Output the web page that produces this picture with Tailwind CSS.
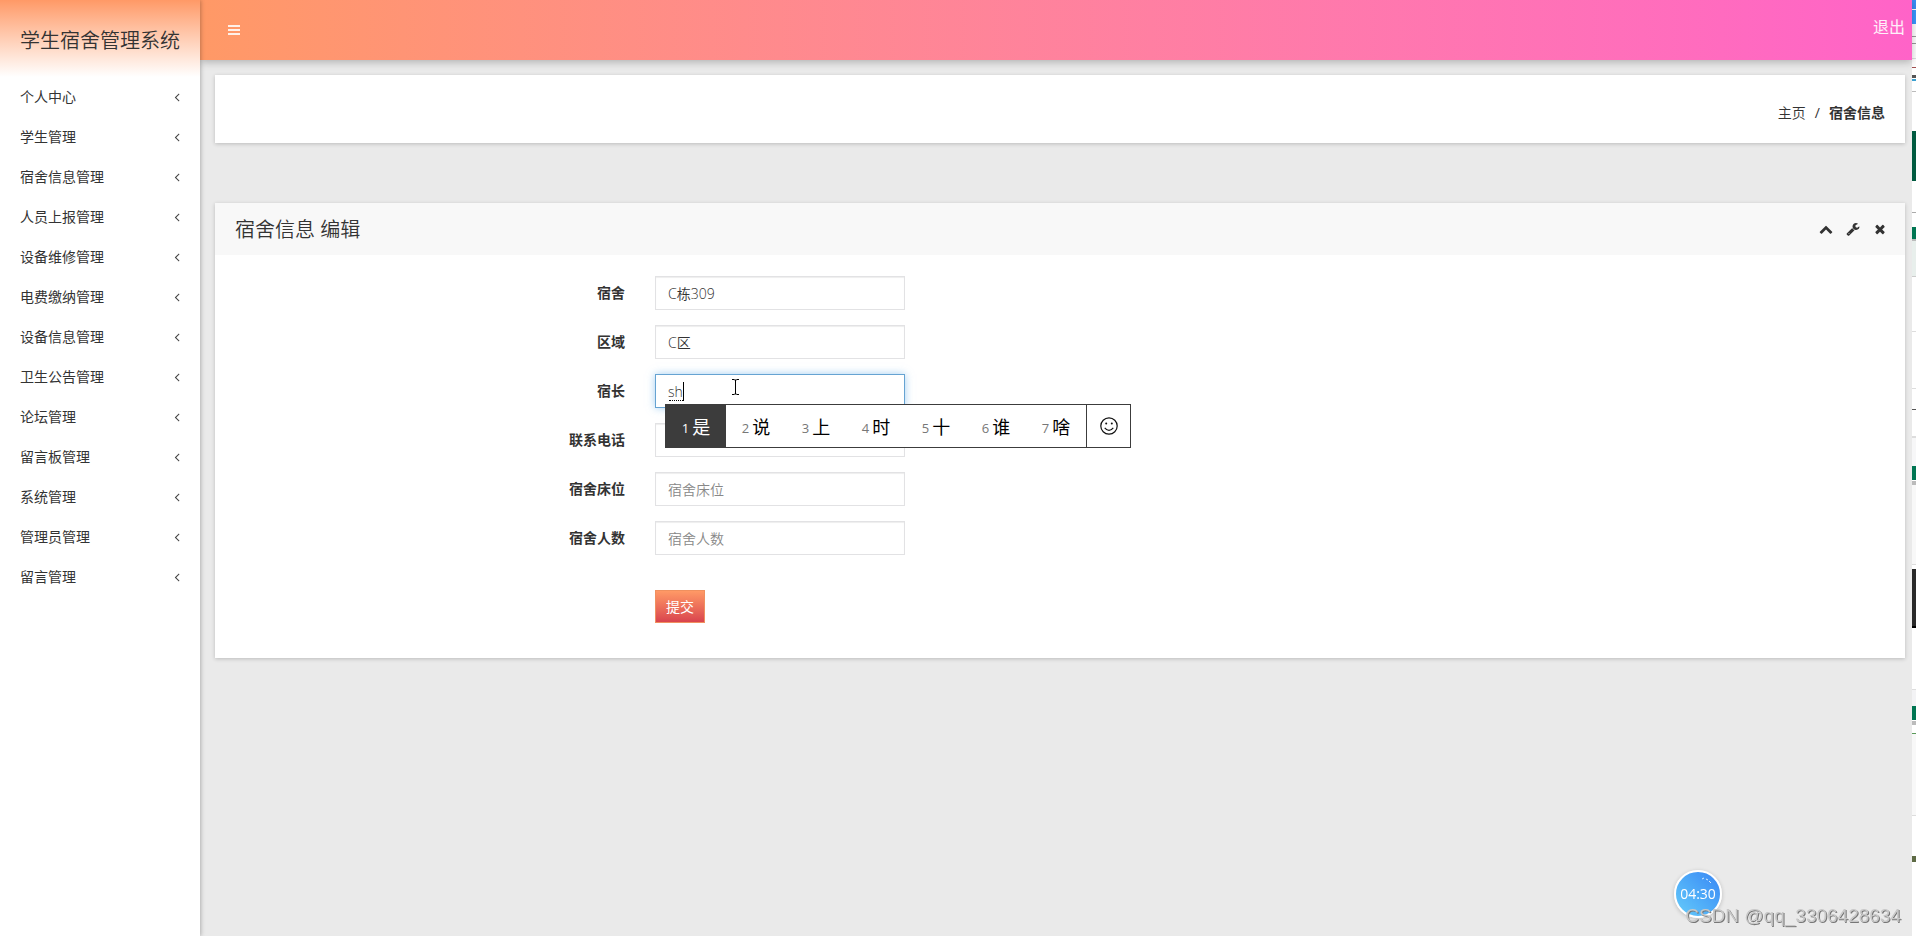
<!DOCTYPE html>
<html lang="zh-CN">
<head>
<meta charset="utf-8">
<title>学生宿舍管理系统</title>
<script src="https://cdn.jsdelivr.net/npm/@tailwindcss/browser@4"></script>
</head>
<body class="flex h-screen overflow-hidden bg-[#eaeaea] font-['Open_Sans','Noto_Sans_CJK_SC',sans-serif] text-sm text-[#333]">
<svg class="hidden">
  <symbol id="angle" viewBox="0 0 1792 1792"><path d="M1203 544q0 13-10 23l-393 393 393 393q10 10 10 23t-10 23l-50 50q-10 10-23 10t-23-10l-466-466q-10-10-10-23t10-23l466-466q10-10 23-10t23 10l50 50q10 10 10 23z"/></symbol>
</svg>

<aside class="relative z-20 w-[200px] shrink-0 bg-white shadow-[1px_0_4px_rgba(0,0,0,0.25)]">
  <h1 class="flex h-[77px] items-center bg-linear-to-b from-[#ff9966] to-white px-5 pt-1 text-xl font-[350] whitespace-nowrap">学生宿舍管理系统</h1>
  <nav>
    <ul id="menu"></ul>
  </nav>
</aside>

<div class="flex min-w-0 flex-1 flex-col">
  <header class="relative z-10 flex h-[60px] shrink-0 items-center justify-between bg-linear-to-r from-[#ff9966] to-[#ff63c8] pr-[7px] pl-7 text-white shadow-[0_2px_8px_rgba(0,0,0,0.25)]">
    <button type="button" aria-label="菜单" class="flex w-3 flex-col gap-[2px]">
      <span class="h-[2px] bg-white/85"></span><span class="h-[2px] bg-white/85"></span><span class="h-[2px] bg-white/85"></span>
    </button>
    <a href="#" class="pb-[6px] text-base text-white/90">退出</a>
  </header>

  <main class="flex-1 pt-[15px] pr-[7px] pl-[15px]">
    <nav class="flex h-[68px] items-center justify-end bg-white px-5 pt-2 shadow-[0_1px_4px_rgba(0,0,0,0.2)]">
      <a href="#" class="font-[350]">主页</a>
      <span class="px-[9px]">/</span>
      <span class="font-bold">宿舍信息</span>
    </nav>

    <section class="mt-[60px] bg-white shadow-[0_1px_4px_rgba(0,0,0,0.2)]">
      <div class="flex h-[52px] items-center justify-between bg-[#f8f8f8] pr-[18px] pl-5">
        <h2 class="pt-[2px] text-xl font-[350]">宿舍信息 编辑</h2>
        <div class="flex gap-[13px]">
          <button type="button" aria-label="收起"><svg class="size-[14px] fill-[#333]" viewBox="0 0 1792 1792"><path d="M1683 1331l-166 165q-19 19-45 19t-45-19l-531-531-531 531q-19 19-45 19t-45-19l-166-165q-19-19-19-45.500t19-45.500l742-741q19-19 45-19t45 19l742 741q19 19 19 45.500t-19 45.500z"/></svg></button>
          <button type="button" aria-label="设置"><svg class="size-[14px] fill-[#333]" viewBox="0 0 1792 1792"><path d="M448 1472q0-26-19-45t-45-19-45 19-19 45 19 45 45 19 45-19 19-45zm644-420l-682 682q-37 37-90 37-52 0-91-37l-106-108q-38-36-38-90 0-53 38-91l681-681q39 98 114.500 173.500t173.500 114.500zm634-435q0 39-23 106-47 134-164.500 217.500t-258.500 83.500q-185 0-316.500-131.500t-131.500-316.500 131.500-316.500 316.500-131.500q58 0 121.500 16.500t107.500 46.500q16 11 16 28t-16 28l-293 169v224l193 107q5-3 79-48.500t135.500-81 70.500-35.500q15 0 23.500 10t8.500 25z"/></svg></button>
          <button type="button" aria-label="关闭"><svg class="size-[14px] fill-[#333]" viewBox="0 0 1792 1792"><path d="M1490 1322q0 40-28 68l-136 136q-28 28-68 28t-68-28l-294-294-294 294q-28 28-68 28t-68-28l-136-136q-28-28-28-68t28-68l294-294-294-294q-28-28-28-68t28-68l136-136q28-28 68-28t68 28l294 294 294-294q28-28 68-28t68 28l136 136q28 28 28 68t-28 68l-294 294 294 294q28 28 28 68z"/></svg></button>
        </div>
      </div>

      <form class="flex flex-col gap-[15px] px-[5px] pt-[21px] pb-[35px]">
        <div class="flex items-center">
          <label for="dorm" class="w-1/4 pr-[15px] text-right font-bold">宿舍</label>
          <div class="pl-[15px]"><input id="dorm" value="C栋309" class="block h-[34px] w-[250px] border border-[#e2e2e4] px-3 font-[350] shadow-[inset_0_1px_1px_rgba(0,0,0,0.07)]"></div>
        </div>
        <div class="flex items-center">
          <label for="area" class="w-1/4 pr-[15px] text-right font-bold">区域</label>
          <div class="pl-[15px]"><input id="area" value="C区" class="block h-[34px] w-[250px] border border-[#e2e2e4] px-3 font-[350] shadow-[inset_0_1px_1px_rgba(0,0,0,0.07)]"></div>
        </div>
        <div class="flex items-center">
          <label for="head" class="w-1/4 pr-[15px] text-right font-bold">宿长</label>
          <div class="pl-[15px]">
            <div class="relative">
              <input id="head" value="sh" class="block h-[34px] w-[250px] border border-[#66a3d2] px-3 font-[350] shadow-[0_0_8px_rgba(102,175,233,0.6)] outline-none">
              <!-- composition underline and caret -->
              <span class="absolute top-[8px] left-[13px] h-[19px] w-4 border-r border-r-black"></span>
              <span class="absolute top-[26px] left-[14px] w-[14px] border-b border-dotted border-black"></span>
              <svg class="absolute top-[5px] left-[76px] h-4 w-[9px]" viewBox="0 0 9 16" fill="none" stroke="#000"><path d="M1 .5h2.500M5.500 .5H8M1 15.500h2.500M5.500 15.500H8M4.500 1v14M3.500 1h2M3.500 15h2"/></svg>
              <!-- input method candidates -->
              <div class="absolute top-[30px] left-[10px] z-10 flex h-11 items-stretch border border-[#3c3c3c] bg-white text-lg text-black">
                <ol id="candidates" class="flex"></ol>
                <button type="button" aria-label="表情" class="flex w-11 items-center justify-center border-l border-[#3c3c3c]">
                  <svg class="size-[18px]" viewBox="0 0 18 18" fill="none" stroke="#111" stroke-width="1.200"><circle cx="9" cy="9" r="8.200"/><path d="M4.700 10.800q4.300 5 8.600 0"/><circle cx="6.200" cy="6.500" r="1" fill="#111" stroke="none"/><circle cx="11.800" cy="6.500" r="1" fill="#111" stroke="none"/></svg>
                </button>
              </div>
            </div>
          </div>
        </div>
        <div class="flex items-center">
          <label for="phone" class="w-1/4 pr-[15px] text-right font-bold">联系电话</label>
          <div class="pl-[15px]"><input id="phone" class="block h-[34px] w-[250px] border border-[#e2e2e4] px-3 font-[350] shadow-[inset_0_1px_1px_rgba(0,0,0,0.07)]"></div>
        </div>
        <div class="flex items-center">
          <label for="beds" class="w-1/4 pr-[15px] text-right font-bold">宿舍床位</label>
          <div class="pl-[15px]"><input id="beds" placeholder="宿舍床位" class="block h-[34px] w-[250px] border border-[#e2e2e4] px-3 font-[350] shadow-[inset_0_1px_1px_rgba(0,0,0,0.07)] placeholder:text-[#888]"></div>
        </div>
        <div class="flex items-center">
          <label for="people" class="w-1/4 pr-[15px] text-right font-bold">宿舍人数</label>
          <div class="pl-[15px]"><input id="people" placeholder="宿舍人数" class="block h-[34px] w-[250px] border border-[#e2e2e4] px-3 font-[350] shadow-[inset_0_1px_1px_rgba(0,0,0,0.07)] placeholder:text-[#888]"></div>
        </div>
        <div class="ml-[25%] pt-5 pl-[15px]">
          <button type="submit" class="block h-[33px] w-[50px] border border-[#f0905f] bg-linear-to-b from-[#ff9966] to-[#d9434e] text-white">提交</button>
        </div>
      </form>
    </section>
  </main>
</div>

<!-- edge of the window behind -->
<div class="flex w-1 shrink-0 flex-col bg-white">
  <div class="h-[10px] border-b border-white bg-[#3b8cf5]"></div>
  <div class="h-[14px] bg-[#3b97ff]"></div>
  <div class="mt-3 h-2 border-y border-[#999]"></div>
  <div class="mt-[14px] h-px bg-[#ddd]"></div>
  <div class="mt-2 h-px bg-[#a05050]"></div>
  <div class="mt-[7px] h-[3px] bg-[#555]"></div>
  <div class="mt-px h-[2px] bg-[#3aa0d0]"></div>
  <div class="mt-[10px] h-px bg-[#bbb]"></div>
  <div class="mt-[39px] h-[50px] bg-[#005a40]"></div>
  <div class="mt-[31px] h-px bg-[#aaa]"></div>
  <div class="mt-[14px] h-[14px] border-b-2 border-[#bbb] bg-[#007552]"></div>
  <div class="h-9 border-b border-[#ccc] bg-[#e8efec]"></div>
  <div class="h-[55px] border-b border-[#ddd]"></div>
  <div class="h-[57px] border-b border-[#ddd]"></div>
  <div class="mt-5 h-px bg-[#555]"></div>
  <div class="h-[28px] border-b-2 border-[#ddd]"></div>
  <div class="h-[28px] bg-[#f7f7f8]"></div>
  <div class="h-[14px] bg-[#007552]"></div>
  <div class="mt-px h-1 bg-[#bbb]"></div>
  <div class="h-[80px] border-b border-[#ddd] bg-[#f8f8f8]"></div>
  <div class="mt-1 h-[59px] border-b-2 border-black bg-[#292929]"></div>
  <div class="h-[62px] border-b border-[#ddd]"></div>
  <div class="h-4 bg-[#f3f3f5]"></div>
  <div class="h-[14px] bg-[#007552]"></div>
  <div class="mt-px h-1 bg-[#bbb]"></div>
  <div class="mt-2 h-px bg-[#5a9a5a]"></div>
  <div class="h-[82px] border-b border-[#ddd] bg-[#f8f8f8]"></div>
  <div class="mt-10 h-[6px] bg-[#5e6b45]"></div>
</div>

<div class="fixed right-[194px] bottom-[18px] z-30 flex size-12 items-center justify-center rounded-full border-2 border-white bg-linear-to-tr from-[#66ccfa] to-[#3a86f4] text-sm text-white shadow-[0_1px_4px_rgba(0,0,0,0.2)]">
  04:30
  <svg class="absolute top-[5px] left-[25px] h-2 w-3" viewBox="0 0 12 8" fill="none" stroke="#d5ecff"><path d="M1 2l2-1M5 2l2 1M8 4l2 2"/></svg>
</div>
<div class="fixed right-[15px] bottom-[7px] z-40 font-['Liberation_Sans',sans-serif] text-[19px] text-[#c8c8c8] text-shadow-[1px_1px_0_#777]">CSDN @qq_3306428634</div>

<script>
document.getElementById('menu').innerHTML = ['个人中心','学生管理','宿舍信息管理','人员上报管理','设备维修管理','电费缴纳管理','设备信息管理','卫生公告管理','论坛管理','留言板管理','系统管理','管理员管理','留言管理'].map(t =>
  `<li><a href="#" class="flex h-10 items-center justify-between pr-4 pl-5">${t}<svg class="size-[14px] fill-[#444]"><use href="#angle"/></svg></a></li>`).join('');
document.getElementById('candidates').innerHTML = ['是','说','上','时','十','谁','啥'].map((t, i) =>
  `<li class="flex w-[60px] items-center justify-center gap-[3px] pt-px ${i ? 'text-black' : 'bg-[#3c3c3c] text-white'}"><span class="pt-1 text-[13px] ${i ? 'text-[#777]' : 'text-white'}">${i + 1}</span>${t}</li>`).join('');
</script>
</body>
</html>
